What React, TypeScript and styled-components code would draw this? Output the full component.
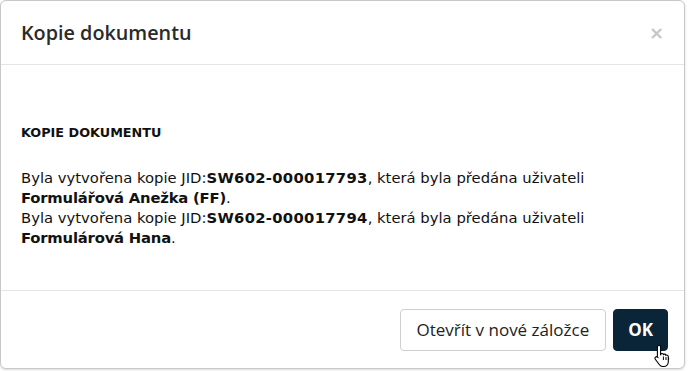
import React from "react";
import styled, { createGlobalStyle } from "styled-components";

const GlobalStyle = createGlobalStyle`
  html, body {
    margin: 0;
    padding: 0;
    background: #ffffff;
  }
`;

const Page = styled.div`
  width: 688px;
  height: 371px;
  position: relative;
  overflow: hidden;
`;

const Modal = styled.div`
  width: 685px;
  height: 369px;
  box-sizing: border-box;
  border: 1px solid #c8c8c8;
  border-radius: 6px;
  background: #fff;
  display: flex;
  flex-direction: column;
  box-shadow: 0 1px 3px rgba(0, 0, 0, 0.15);
`;

const Header = styled.div`
  height: 64px;
  box-sizing: border-box;
  display: flex;
  align-items: center;
  justify-content: space-between;
  padding: 0 20px 0 20px;
  border-bottom: 1px solid #e5e5e5;
`;

const Title = styled.h4`
  margin: 0;
  font-family: "Open Sans", sans-serif;
  font-size: 19.8px;
  font-weight: 600;
  color: #2a2a2a;
`;

const Close = styled.span`
  font-family: "DejaVu Sans", sans-serif;
  font-size: 18px;
  color: #c6c6c6;
  font-weight: bold;
`;

const Body = styled.div`
  flex: 1;
  padding: 58px 20px 0 20px;
  font-family: "DejaVu Sans", Verdana, sans-serif;
  font-size: 14.8px;
  line-height: 20px;
  color: #111;
`;

const Caption = styled.p`
  margin: 0 0 25px 0;
  font-size: 12.8px;
  font-weight: bold;
`;

const Message = styled.p`
  margin: 0;
`;

const Strong = styled.b<{ $wide?: boolean }>`
  font-weight: bold;
  letter-spacing: ${(p) => (p.$wide ? "0.3px" : "-0.2px")};
`;

const Footer = styled.div`
  height: 78px;
  box-sizing: border-box;
  border-top: 1px solid #e5e5e5;
  display: flex;
  align-items: center;
  justify-content: flex-end;
  gap: 7px;
  padding: 0 16px;
`;

const Button = styled.button<{ $primary?: boolean }>`
  position: relative;
  height: 42px;
  box-sizing: border-box;
  padding: 0 ${(p) => (p.$primary ? 14 : 16)}px;
  border-radius: 4px;
  font-family: "Open Sans", sans-serif;
  font-size: 17px;
  font-weight: ${(p) => (p.$primary ? 700 : 500)};
  color: ${(p) => (p.$primary ? "#fff" : "#222")};
  background: ${(p) => (p.$primary ? "#0a2538" : "#fff")};
  border: 1px solid ${(p) => (p.$primary ? "#0a2538" : "#cfcfcf")};
`;

const Cursor = styled.svg`
  position: absolute;
  left: 40px;
  top: 33px;
`;

export default function App() {
  return (
    <Page>
      <GlobalStyle />
      <Modal>
        <Header>
          <Title>Kopie dokumentu</Title>
          <Close>×</Close>
        </Header>
        <Body>
          <Caption>KOPIE DOKUMENTU</Caption>
          <Message>
            Byla vytvořena kopie JID:<Strong $wide>SW602-000017793</Strong>, která byla předána uživateli
            <br />
            <Strong>Formulářová Anežka (FF)</Strong>.
          </Message>
          <Message>
            Byla vytvořena kopie JID:<Strong $wide>SW602-000017794</Strong>, která byla předána uživateli
            <br />
            <Strong>Formulárová Hana</Strong>.
          </Message>
        </Body>
        <Footer>
          <Button>Otevřít v nové záložce</Button>
          <Button $primary>
            OK
            <Cursor width="20" height="26" viewBox="0 0 20 24">
              <path
                d="M5 1.5c1 0 1.6.7 1.6 1.6v8.2l.3-1.4c.8-.8 2.2-.5 2.5.6.8-.8 2.3-.4 2.5.8.9-.6 2.3-.1 2.4 1.1v5.4c0 2.6-1.9 4.7-4.6 4.7H8.6c-1.4 0-2.4-.6-3.2-1.7L1.3 15.2c-.6-.8-.4-1.9.4-2.3.7-.4 1.5-.2 2 .4l-.3-.1V3.1C3.4 2.2 4 1.5 5 1.5z"
                fill="#fff"
                stroke="#000"
                strokeWidth="1.1"
              />
              <path d="M9.4 12.5v3.5M12 13v3M14.6 13.6v2.4" stroke="#000" strokeWidth="1" />
            </Cursor>
          </Button>
        </Footer>
      </Modal>
    </Page>
  );
}
